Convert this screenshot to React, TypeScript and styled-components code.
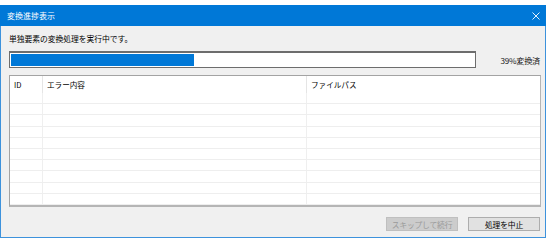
import React from 'react';
import styled, { createGlobalStyle } from 'styled-components';

const GlobalStyle = createGlobalStyle`
  html, body {
    margin: 0;
    padding: 0;
    background: #ffffff;
  }

  body {
    font-family: "Noto Sans CJK JP", "Noto Sans", sans-serif;
    -webkit-font-smoothing: antialiased;
  }
`;

const Window = styled.div`
  margin-top: 5px;
  width: 546px;
  height: 233px;
  box-sizing: border-box;
  border: 1px solid #3d92dc;
  border-top: none;
  background: #f0f0f0;
  display: flex;
  flex-direction: column;
`;

const TitleBar = styled.div`
  height: 21px;
  margin: 0 -1px;
  background: #0078d7;
  display: flex;
  align-items: center;
  justify-content: space-between;
  padding: 0 5px 0 7px;
  color: #ffffff;
  font-size: 8px;
  line-height: 1;
`;

const CloseButton = styled.div`
  width: 10px;
  height: 10px;
  display: flex;
  align-items: center;
  justify-content: center;

  svg {
    width: 8px;
    height: 8px;
  }
`;

const Content = styled.div`
  flex: 1;
  display: flex;
  flex-direction: column;
  padding: 6px 4px 6px 8px;
`;

const Message = styled.div`
  font-size: 7.8px;
  line-height: 14px;
  color: #000000;
  letter-spacing: -0.05px;
`;

const ProgressRow = styled.div`
  margin-top: 5px;
  display: flex;
  align-items: center;
  justify-content: space-between;
`;

const ProgressTrack = styled.div`
  width: 467px;
  height: 17px;
  box-sizing: border-box;
  border: 1px solid #6d6d6d;
  border-top-width: 2px;
  background: #ffffff;
  padding: 1px;
  display: flex;
`;

const ProgressFill = styled.div`
  height: 100%;
  background: #0078d7;
`;

const ProgressLabel = styled.div`
  font-size: 8.2px;
  color: #1a1a1a;
  letter-spacing: -0.3px;
  padding-right: 1px;
`;

const ListView = styled.div`
  margin-top: 7px;
  height: 132px;
  box-sizing: border-box;
  border: 1px solid #a3a3a3;
  border-bottom: 2px solid #b5b5b5;
  border-right-color: #b5b5b5;
  background: #ffffff;
  display: flex;
  flex-direction: column;
  overflow: hidden;
`;

const Row = styled.div<{ $header?: boolean }>`
  display: grid;
  grid-template-columns: 33px 264px 1fr;
  height: ${(p) => (p.$header ? '17px' : '11.2px')};
  box-sizing: border-box;
  border-bottom: ${(p) => (p.$header ? 'none' : '1px solid #eeeeee')};
  flex-shrink: 0;
`;

const Cell = styled.div<{ $header?: boolean }>`
  border-right: 1px solid ${(p) => (p.$header ? '#e5e5e5' : '#efefef')};
  font-size: 7.6px;
  line-height: 17px;
  padding-left: 4px;
  color: #000000;
  white-space: nowrap;
  overflow: hidden;

  &:last-child {
    border-right: none;
  }
`;

const ButtonRow = styled.div`
  margin-top: 10px;
  display: flex;
  justify-content: flex-end;
  gap: 10px;
  padding-right: 1px;
`;

const Button = styled.div<{ $disabled?: boolean }>`
  width: 72px;
  height: 14px;
  box-sizing: border-box;
  border: 1px solid ${(p) => (p.$disabled ? '#bfbfbf' : '#adadad')};
  background: ${(p) => (p.$disabled ? '#cccccc' : '#e1e1e1')};
  color: ${(p) => (p.$disabled ? '#9a9a9a' : '#000000')};
  font-size: 7.8px;
  display: flex;
  align-items: center;
  justify-content: center;
  letter-spacing: -0.2px;
`;

const rowCount = 10;
const progress = 39;

export default function App() {
  return (
    <>
      <GlobalStyle />
      <Window>
        <TitleBar>
          <span>変換進捗表示</span>
          <CloseButton>
            <svg viewBox="0 0 8 8" fill="none" stroke="#ffffff" strokeWidth="0.9">
              <path d="M0.5 0.5 L7.5 7.5 M7.5 0.5 L0.5 7.5" />
            </svg>
          </CloseButton>
        </TitleBar>
        <Content>
          <Message>単独要素の変換処理を実行中です。</Message>
          <ProgressRow>
            <ProgressTrack>
              <ProgressFill style={{ width: `${progress + 0.5}%` }} />
            </ProgressTrack>
            <ProgressLabel>{progress}%変換済</ProgressLabel>
          </ProgressRow>
          <ListView>
            <Row $header>
              <Cell $header>ID</Cell>
              <Cell $header>エラー内容</Cell>
              <Cell $header>ファイルパス</Cell>
            </Row>
            {Array.from({ length: rowCount }).map((_, i) => (
              <Row key={i}>
                <Cell />
                <Cell />
                <Cell />
              </Row>
            ))}
          </ListView>
          <ButtonRow>
            <Button $disabled>スキップして続行</Button>
            <Button>処理を中止</Button>
          </ButtonRow>
        </Content>
      </Window>
    </>
  );
}
